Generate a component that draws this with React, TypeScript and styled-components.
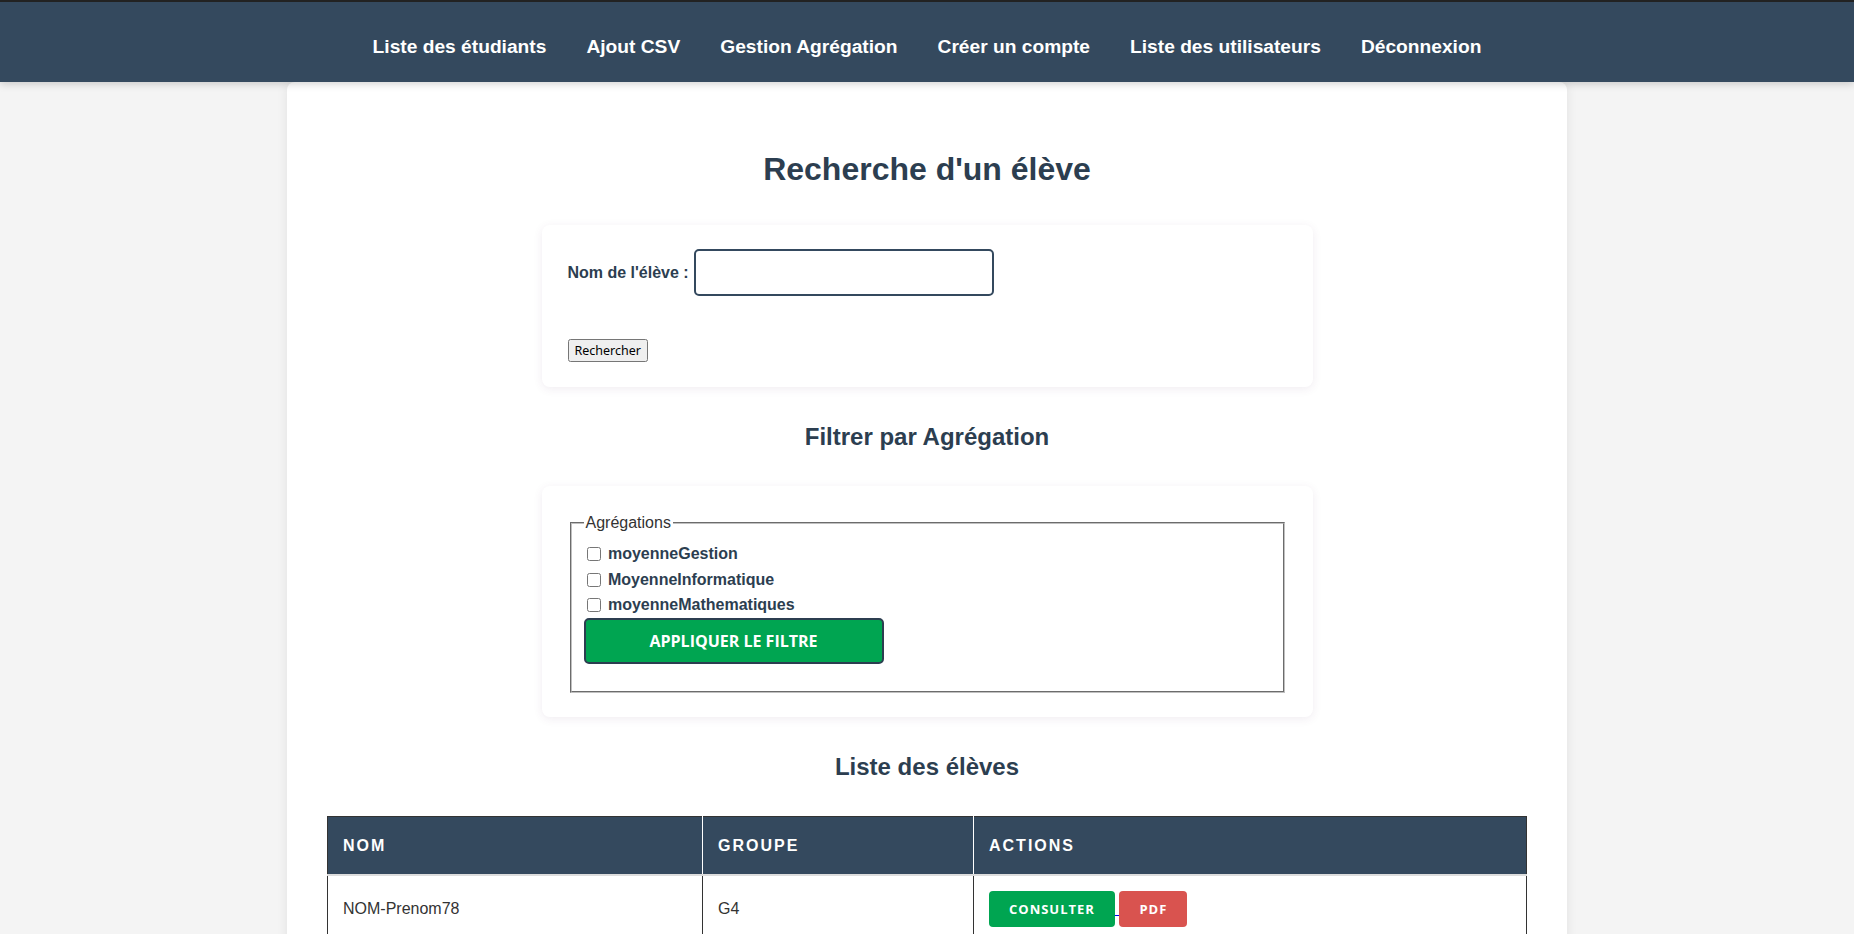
import React from "react";
import styled, { createGlobalStyle } from "styled-components";

const GlobalStyle = createGlobalStyle`
  body {
    margin: 0;
    background-color: #f4f4f4;
    font-family: "Liberation Sans", Arial, sans-serif;
    line-height: 1.6;
    color: #333333;
  }
`;

const NavBar = styled.nav`
  position: sticky;
  top: 0;
  z-index: 10;
  background-color: #34495e;
  border-top: 2px solid #222222;
  padding: 30px 0 19px;
  display: flex;
  justify-content: center;
  gap: 40px;
  box-shadow: 0 2px 8px rgba(0, 0, 0, 0.18);
`;

const NavLink = styled.a`
  color: #ffffff;
  font-weight: 700;
  font-size: 19.2px;
  text-decoration: none;
`;

const Container = styled.main`
  width: 1280px;
  box-sizing: border-box;
  margin: 0 auto;
  padding: 41px 40px 40px;
  background-color: #ffffff;
  border-radius: 8px;
  box-shadow: 0 0 12px rgba(0, 0, 0, 0.08);
`;

const PageTitle = styled.h1`
  font-size: 32px;
  color: #2c3e50;
  text-align: center;
  margin: 21px 0;
`;

const SectionTitle = styled.h2`
  font-size: 24px;
  color: #2c3e50;
  text-align: center;
  margin: 31px 0 30px;
`;

const Card = styled.section`
  width: 771px;
  box-sizing: border-box;
  margin: 30px auto;
  padding: 24px 26px;
  background-color: #ffffff;
  border-radius: 8px;
  box-shadow: 0 2px 10px rgba(90, 40, 100, 0.09);
`;

const FieldRow = styled.div`
  display: flex;
  align-items: center;
  gap: 5px;
`;

const FieldLabel = styled.label`
  font-weight: 700;
  font-size: 16px;
  color: #2c3e50;
`;

const TextInput = styled.input`
  width: 300px;
  height: 47px;
  box-sizing: border-box;
  border: 2px solid #34495e;
  border-radius: 5px;
  padding: 8px 10px;
  font-size: 16px;
`;

const ButtonRow = styled.div`
  margin-top: 41px;
`;

const SearchButton = styled.button`
  font-family: "Noto Sans", sans-serif;
  font-size: 12.5px;
  padding: 1px 5px;
`;

const Fieldset = styled.fieldset`
  margin: 0 2px;
  border: 2px groove #c0c0c0;
`;

const Legend = styled.legend`
  font-size: 16px;
  color: #333333;
`;

const CheckRow = styled.div`
  font-size: 16px;
`;

const CheckBox = styled.input`
  width: 14px;
  height: 14px;
  margin: 3px 3px 3px 3px;
  vertical-align: -2px;
`;

const CheckLabel = styled.label`
  font-weight: 700;
  color: #2c3e50;
`;

const ApplyButton = styled.button`
  display: block;
  width: 300px;
  height: 46px;
  margin: 0 0 17px;
  background-color: #00a551;
  border: 2px solid #2c3e50;
  border-radius: 5px;
  color: #ffffff;
  font-family: "Open Sans", sans-serif;
  font-weight: 700;
  font-size: 16px;
  text-transform: uppercase;
  cursor: pointer;
`;

const Table = styled.table`
  width: 100%;
  margin-top: 30px;
  border-collapse: collapse;
  border: 1px solid #333333;
`;

const HeadCell = styled.th<{ w?: number }>`
  width: ${(p) => (p.w ? `${p.w}px` : "auto")};
  background-color: #34495e;
  color: #ffffff;
  font-size: 16px;
  font-weight: 700;
  letter-spacing: 2px;
  text-transform: uppercase;
  text-align: left;
  padding: 15.5px 15px;
  border-right: 1px solid #ffffff;

  &:last-child {
    border-right: 1px solid #333333;
  }
`;

const Row = styled.tr`
  border-top: 2px solid #dddddd;
`;

const Cell = styled.td`
  padding: 15px;
  font-size: 16px;
  color: #333333;
  border-right: 1px solid #333333;
  background-color: #ffffff;
`;

const ActionLink = styled.a`
  color: #0000ee;
  text-decoration: underline;
`;

const ActionButton = styled.button<{ tone: "green" | "red" }>`
  background-color: ${(p) => (p.tone === "green" ? "#00a551" : "#d9534f")};
  color: #ffffff;
  border: none;
  border-radius: 4px;
  padding: 10px 20px;
  font-family: "Open Sans", sans-serif;
  font-weight: 700;
  font-size: 13px;
  line-height: 16px;
  letter-spacing: 1px;
  text-transform: uppercase;
  cursor: pointer;
`;

const navItems = [
  "Liste des étudiants",
  "Ajout CSV",
  "Gestion Agrégation",
  "Créer un compte",
  "Liste des utilisateurs",
  "Déconnexion",
];

const aggregations = [
  "moyenneGestion",
  "MoyenneInformatique",
  "moyenneMathematiques",
];

const students = [
  { nom: "NOM-Prenom78", groupe: "G4" },
  ...Array.from({ length: 34 }, (_, i) => ({
    nom: `NOM-Prenom${(i * 7 + 12) % 99}`,
    groupe: `G${(i % 5) + 1}`,
  })),
];

export default function App() {
  return (
    <>
      <GlobalStyle />
      <NavBar>
        {navItems.map((item) => (
          <NavLink key={item} href="#">
            {item}
          </NavLink>
        ))}
      </NavBar>

      <Container>
        <PageTitle>Recherche d'un élève</PageTitle>

        <Card>
          <form onSubmit={(e) => e.preventDefault()}>
            <FieldRow>
              <FieldLabel htmlFor="nom">Nom de l'élève :</FieldLabel>
              <TextInput id="nom" type="text" />
            </FieldRow>
            <ButtonRow>
              <SearchButton type="submit">Rechercher</SearchButton>
            </ButtonRow>
          </form>
        </Card>

        <SectionTitle>Filtrer par Agrégation</SectionTitle>

        <Card>
          <Fieldset>
            <Legend>Agrégations</Legend>
            {aggregations.map((agg) => (
              <CheckRow key={agg}>
                <CheckBox type="checkbox" id={agg} />{" "}
                <CheckLabel htmlFor={agg}>{agg}</CheckLabel>
              </CheckRow>
            ))}
            <ApplyButton type="button">Appliquer le filtre</ApplyButton>
          </Fieldset>
        </Card>

        <SectionTitle>Liste des élèves</SectionTitle>

        <Table>
          <thead>
            <tr>
              <HeadCell w={344}>Nom</HeadCell>
              <HeadCell w={240}>Groupe</HeadCell>
              <HeadCell>Actions</HeadCell>
            </tr>
          </thead>
          <tbody>
            {students.map((s, i) => (
              <Row key={i}>
                <Cell>{s.nom}</Cell>
                <Cell>{s.groupe}</Cell>
                <Cell>
                  <ActionLink href="#">
                    <ActionButton tone="green">Consulter</ActionButton>{" "}
                  </ActionLink>
                  <ActionLink href="#">
                    <ActionButton tone="red">PDF</ActionButton>
                  </ActionLink>
                </Cell>
              </Row>
            ))}
          </tbody>
        </Table>
      </Container>
    </>
  );
}
